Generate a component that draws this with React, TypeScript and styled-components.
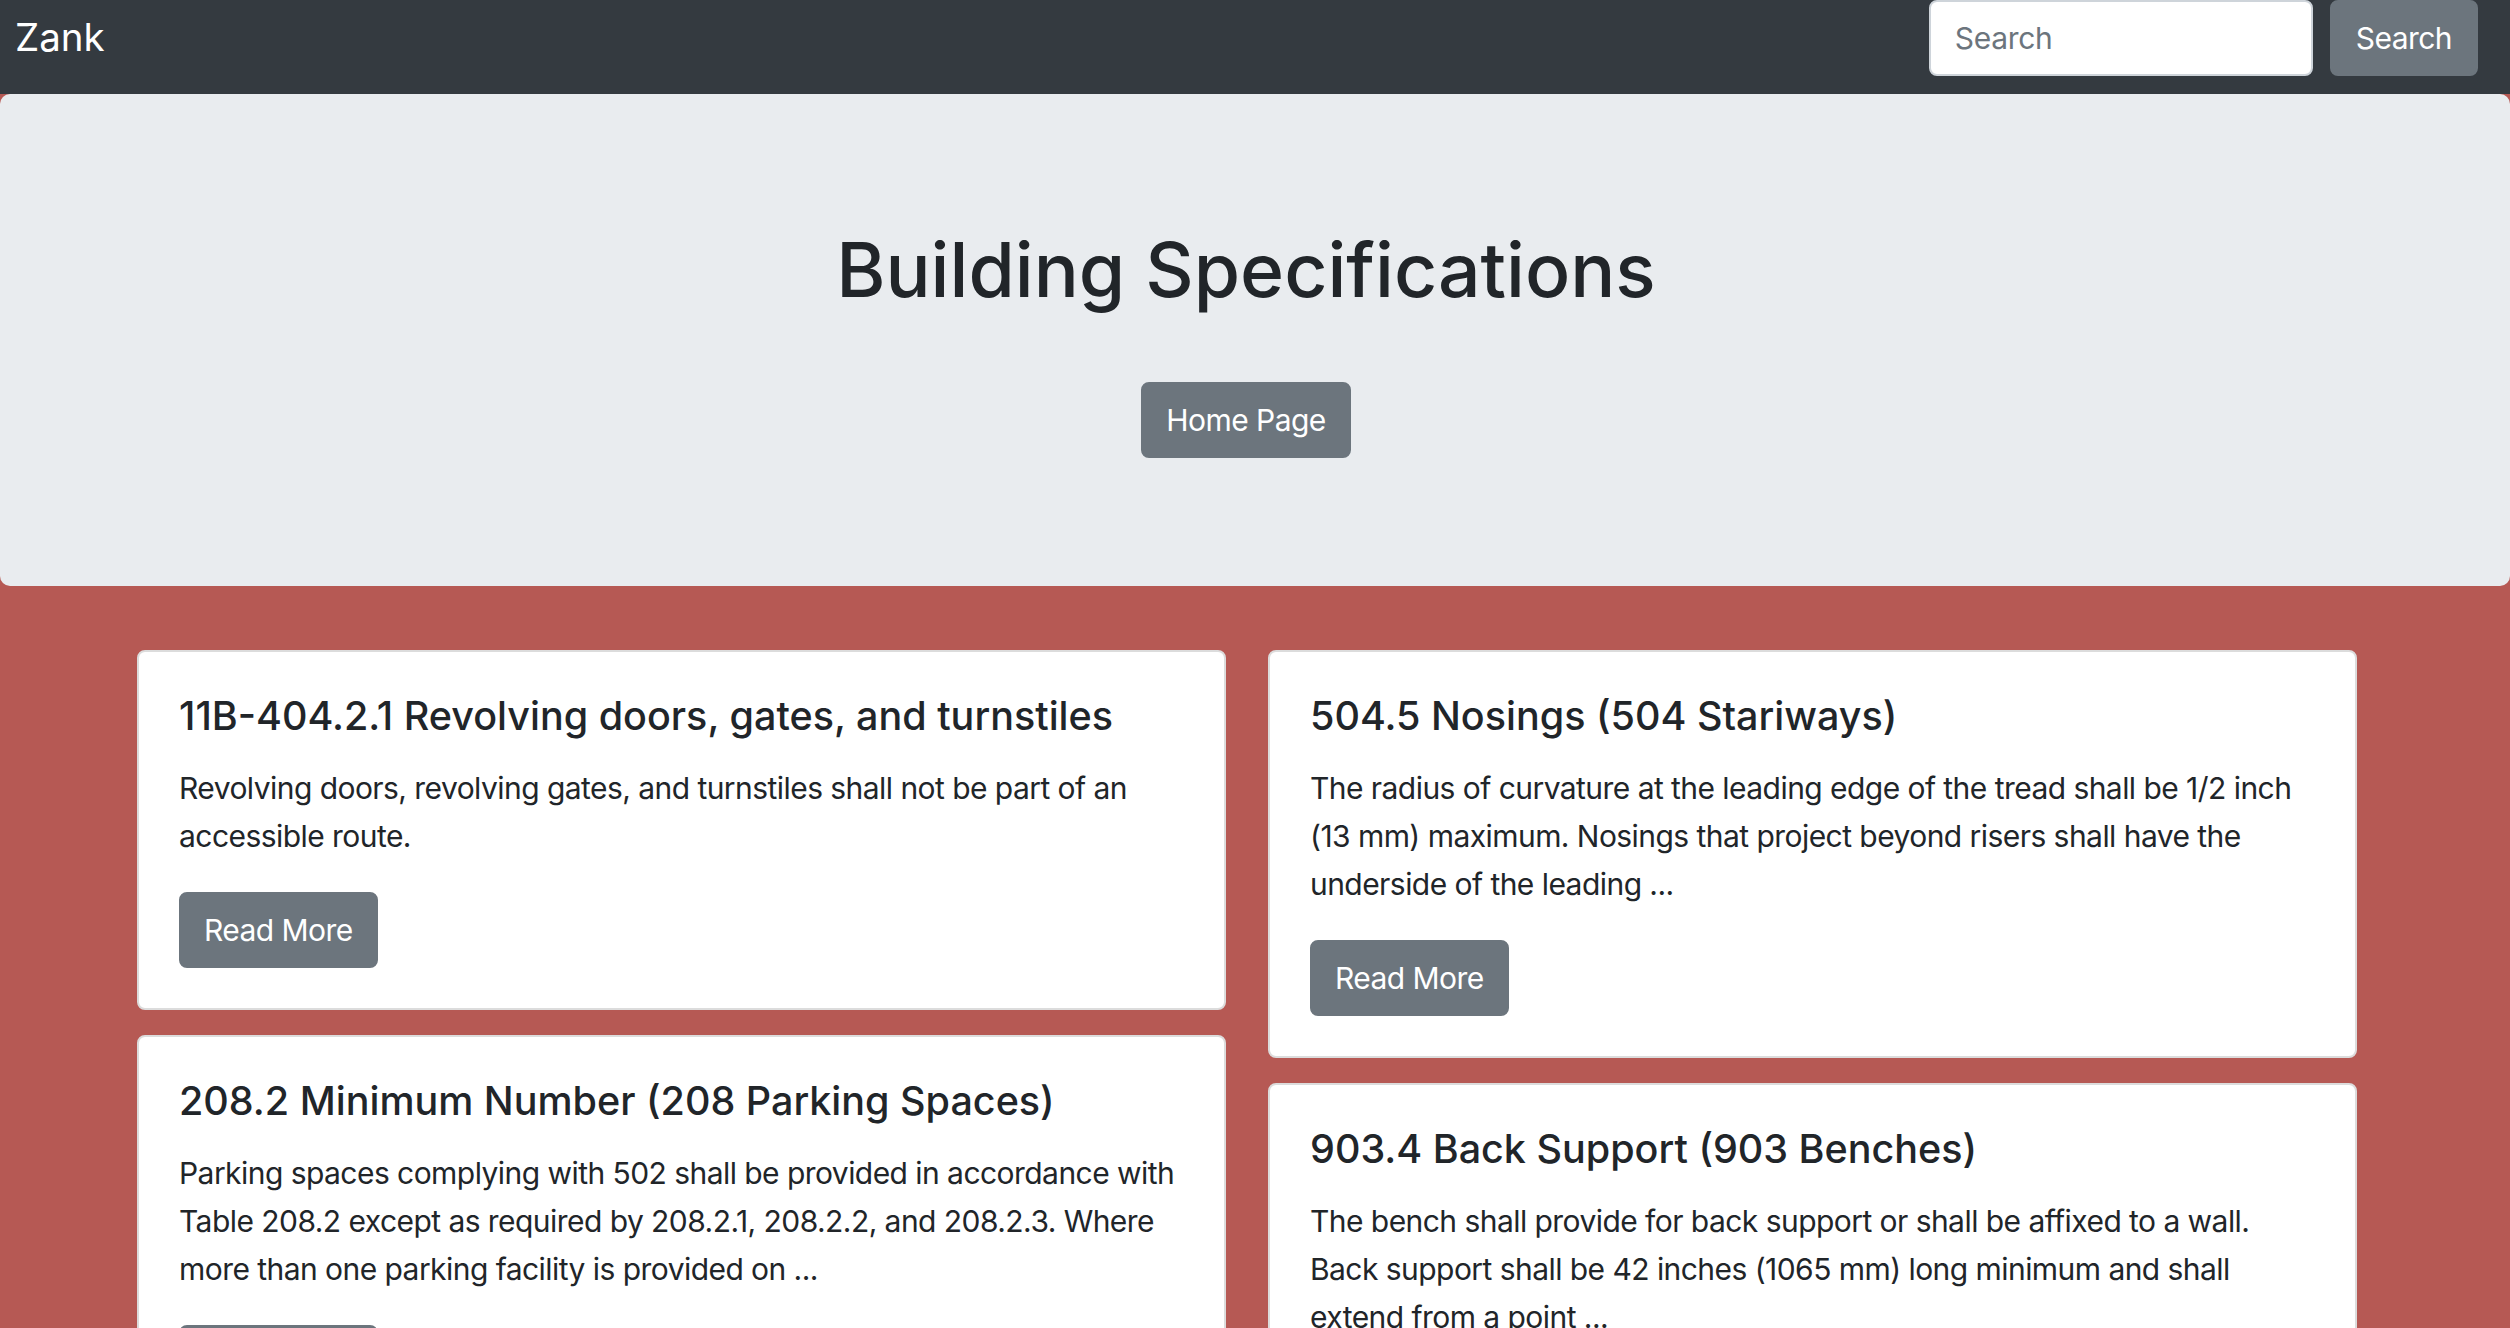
import React from "react";
import styled, { createGlobalStyle } from "styled-components";

const GlobalStyle = createGlobalStyle`
  html, body {
    margin: 0;
    padding: 0;
    overflow: hidden;
  }
  body {
    background: #b65954;
    font-family: Inter, "Noto Sans", "Liberation Sans", sans-serif;
    color: #212529;
  }
  * { box-sizing: border-box; }
`;

const NavBar = styled.nav`
  height: 94px;
  background: #343a40;
  display: flex;
  justify-content: space-between;
  align-items: flex-start;
  padding: 0 32px 0 15px;
`;

const Brand = styled.a`
  margin-top: 7px;
  font-size: 38.5px;
  line-height: 60px;
  color: #ffffff;
  text-decoration: none;
`;

const SearchForm = styled.form`
  display: flex;
  gap: 17px;
  align-items: flex-start;
`;

const SearchInput = styled.input`
  width: 384px;
  height: 76px;
  border: 2px solid #ced4da;
  border-radius: 8px;
  background: #ffffff;
  padding: 0 24px;
  font-family: Inter, "Noto Sans", sans-serif;
  font-size: 30px;
  letter-spacing: -0.3px;
  color: #495057;
  outline: none;
  &::placeholder { color: #6c757d; }
`;

const GreyButton = styled.button<{ $pad?: number }>`
  height: 76px;
  border: 2px solid #6c757d;
  border-radius: 8px;
  background: #6c757d;
  color: #ffffff;
  font-family: Inter, "Noto Sans", sans-serif;
  font-size: 30px;
  letter-spacing: -0.55px;
  line-height: 48px;
  padding: 0 ${(p) => p.$pad ?? 23}px;
  cursor: pointer;
`;

const Hero = styled.header`
  background: #e9ecef;
  border-radius: 10px;
  padding: 128px 18px 128px 0;
  display: flex;
  flex-direction: column;
  align-items: center;
`;

const HeroTitle = styled.h1`
  margin: 0 0 64px;
  font-size: 75px;
  font-weight: 500;
  line-height: 96px;
  color: #212529;
`;

const Main = styled.main`
  padding: 64px 0 0 137px;
`;

const Grid = styled.div`
  display: grid;
  grid-template-columns: 1089px 1089px;
  column-gap: 42px;
  align-items: start;
`;

const Column = styled.div`
  display: flex;
  flex-direction: column;
  gap: 25px;
`;

const Card = styled.article`
  background: #ffffff;
  border: 2px solid #dcdcdc;
  border-radius: 8px;
  padding: 40px;
`;

const CardTitle = styled.h5`
  margin: 0 0 24px;
  font-size: 39.5px;
  font-weight: 500;
  line-height: 48px;
  color: #212529;
`;

const CardText = styled.p`
  margin: 0 0 32px;
  font-size: 30px;
  letter-spacing: -0.55px;
  line-height: 48px;
  color: #212529;
`;

type Spec = { title: string; text: string };

const left: Spec[] = [
  {
    title: "11B-404.2.1 Revolving doors, gates, and turnstiles",
    text: "Revolving doors, revolving gates, and turnstiles shall not be part of an accessible route.",
  },
  {
    title: "208.2 Minimum Number (208 Parking Spaces)",
    text: "Parking spaces complying with 502 shall be provided in accordance with Table 208.2 except as required by 208.2.1, 208.2.2, and 208.2.3. Where more than one parking facility is provided on ...",
  },
];

const right: Spec[] = [
  {
    title: "504.5 Nosings (504 Stariways)",
    text: "The radius of curvature at the leading edge of the tread shall be 1/2 inch (13 mm) maximum. Nosings that project beyond risers shall have the underside of the leading ...",
  },
  {
    title: "903.4 Back Support (903 Benches)",
    text: "The bench shall provide for back support or shall be affixed to a wall. Back support shall be 42 inches (1065 mm) long minimum and shall extend from a point ...",
  },
];

function SpecCard({ spec }: { spec: Spec }) {
  return (
    <Card>
      <CardTitle>{spec.title}</CardTitle>
      <CardText>{spec.text}</CardText>
      <GreyButton type="button">Read More</GreyButton>
    </Card>
  );
}

export default function App() {
  return (
    <>
      <GlobalStyle />
      <NavBar>
        <Brand href="#">Zank</Brand>
        <SearchForm onSubmit={(e) => e.preventDefault()}>
          <SearchInput type="search" placeholder="Search" />
          <GreyButton type="submit" $pad={24}>Search</GreyButton>
        </SearchForm>
      </NavBar>
      <Hero>
        <HeroTitle>Building Specifications</HeroTitle>
        <GreyButton type="button">Home Page</GreyButton>
      </Hero>
      <Main>
        <Grid>
          <Column>
            {left.map((s) => (
              <SpecCard key={s.title} spec={s} />
            ))}
          </Column>
          <Column>
            {right.map((s) => (
              <SpecCard key={s.title} spec={s} />
            ))}
          </Column>
        </Grid>
      </Main>
    </>
  );
}
